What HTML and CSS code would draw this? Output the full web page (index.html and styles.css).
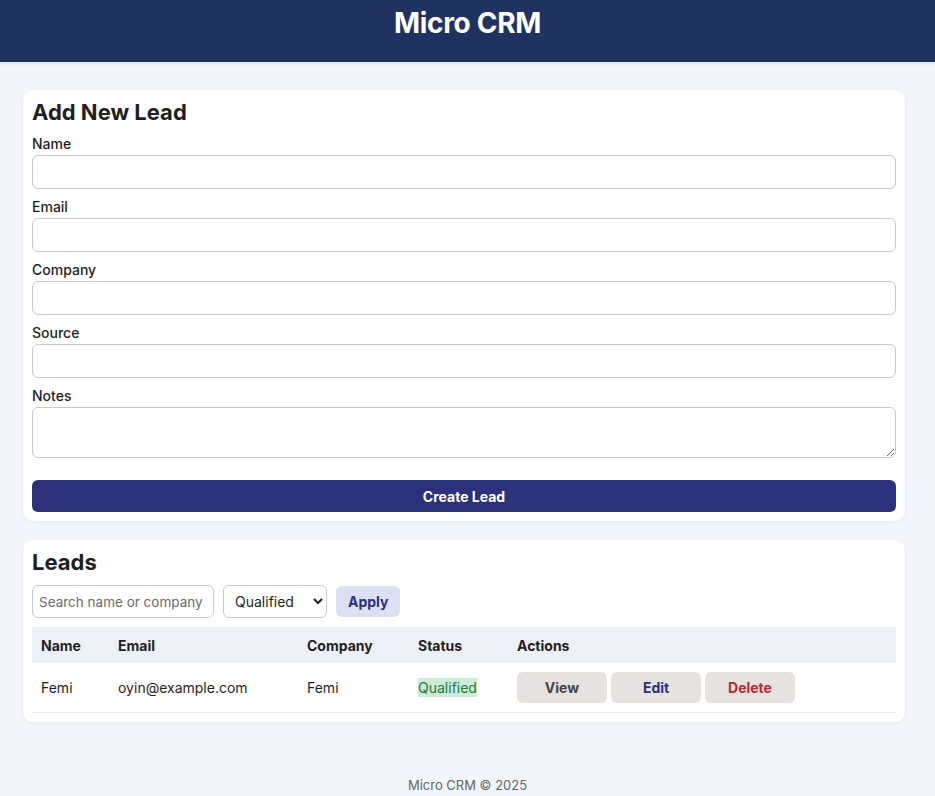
FILE: index.html
```html
<!DOCTYPE html>
<html lang="en">
<head>
<meta charset="utf-8">
<title>Micro CRM</title>
<link rel="stylesheet" href="styles.css">
</head>
<body>
<header class="topbar">
  <h1 class="brand">Micro CRM</h1>
</header>
<main class="main">
  <section class="card">
    <h2 class="card-title">Add New Lead</h2>
    <form class="lead-form">
      <label class="field-label" for="name">Name</label>
      <input class="field-input" id="name" type="text">
      <label class="field-label" for="email">Email</label>
      <input class="field-input" id="email" type="email">
      <label class="field-label" for="company">Company</label>
      <input class="field-input" id="company" type="text">
      <label class="field-label" for="source">Source</label>
      <input class="field-input" id="source" type="text">
      <label class="field-label" for="notes">Notes</label>
      <textarea class="field-input field-area" id="notes"></textarea>
      <button class="btn-primary" type="button">Create Lead</button>
    </form>
  </section>
  <section class="card">
    <h2 class="card-title">Leads</h2>
    <div class="filters">
      <input class="filter-search" type="text" placeholder="Search name or company">
      <select class="filter-select">
        <option>Qualified</option>
      </select>
      <button class="btn-apply" type="button">Apply</button>
    </div>
    <table class="leads">
      <thead>
        <tr>
          <th class="c-name">Name</th>
          <th class="c-email">Email</th>
          <th class="c-company">Company</th>
          <th class="c-status">Status</th>
          <th class="c-actions">Actions</th>
        </tr>
      </thead>
      <tbody>
        <tr>
          <td>Femi</td>
          <td>oyin@example.com</td>
          <td>Femi</td>
          <td><span class="badge">Qualified</span></td>
          <td>
            <div class="actions">
              <button class="btn-act btn-view" type="button">View</button>
              <button class="btn-act btn-edit" type="button">Edit</button>
              <button class="btn-act btn-delete" type="button">Delete</button>
            </div>
          </td>
        </tr>
      </tbody>
    </table>
  </section>
</main>
<footer class="footer">Micro CRM © 2025</footer>
</body>
</html>
```

FILE: styles.css
```css
* { box-sizing: border-box; }
html, body { margin: 0; padding: 0; }
body {
  background: #f2f5fa;
  font-family: Inter, "Noto Sans", sans-serif;
  color: #1f1f1f;
}
.topbar {
  background: #203260;
  height: 62px;
  padding-top: 6px;
  text-align: center;
  box-shadow: 0 2px 4px rgba(0,0,0,0.08);
}
.brand {
  margin: 0;
  color: #fff;
  font-size: 28px;
  line-height: 34px;
  font-weight: 700;
  letter-spacing: -0.3px;
}
.main {
  padding: 28px 30px 0 23px;
  display: flex;
  flex-direction: column;
  gap: 19px;
}
.card {
  background: #fff;
  border-radius: 10px;
  padding: 9px;
  box-shadow: 0 1px 4px rgba(30,40,70,0.06);
}
.card-title {
  margin: 0 0 9px;
  font-size: 22px;
  line-height: 27px;
  font-weight: 700;
  color: #1f1f1f;
}
.lead-form {
  display: flex;
  flex-direction: column;
}
.field-label {
  font-size: 14px;
  line-height: 17px;
  font-weight: 500;
  margin-bottom: 3px;
  color: #1f1f1f;
}
.field-input {
  height: 34px;
  border: 1px solid #c3cad6;
  border-radius: 6px;
  margin: 0 0 9px;
  font-family: inherit;
  font-size: 14px;
  padding: 0 8px;
  background: #fff;
}
.field-area {
  height: 51px;
  resize: vertical;
  margin-bottom: 22px;
}
.btn-primary {
  height: 32px;
  border: 0;
  border-radius: 6px;
  background: #2b317a;
  color: #fff;
  font-family: inherit;
  font-size: 14px;
  font-weight: 700;
}
.filters {
  display: flex;
  align-items: center;
  gap: 9px;
  margin: 9px 0 9px;
}
.filter-search {
  width: 182px;
  height: 33px;
  border: 1px solid #c3cad6;
  border-radius: 6px;
  padding: 0 6px;
  font-family: inherit;
  font-size: 13.5px;
  color: #1f1f1f;
}
.filter-search::placeholder { color: #6b6b6b; }
.filter-select {
  width: 104px;
  height: 33px;
  border: 1px solid #c3cad6;
  border-radius: 6px;
  padding: 0 7px;
  font-family: inherit;
  font-size: 14px;
  background: #fff;
  color: #1f1f1f;
}
.btn-apply {
  height: 31px;
  padding: 0 12px;
  border: 0;
  border-radius: 6px;
  background: #dde0f3;
  color: #2b317a;
  font-family: inherit;
  font-size: 14px;
  font-weight: 700;
}
.leads {
  width: 100%;
  border-collapse: collapse;
  font-size: 14px;
}
.leads th {
  background: #edf0f7;
  text-align: left;
  font-weight: 700;
  height: 36px;
  padding: 0 9px;
  color: #1f1f1f;
}
.leads td {
  height: 49px;
  padding: 0 9px;
  border-bottom: 1px solid #e5e7eb;
  color: #1f1f1f;
}
.c-name { width: 77px; }
.c-email { width: 189px; }
.c-company { width: 111px; }
.c-status { width: 99px; }
.badge {
  background: #cdebd6;
  color: #1e7a3a;
  padding: 1px 0;
}
.actions {
  display: flex;
  gap: 4px;
}
.btn-act {
  width: 90px;
  height: 31px;
  border: 0;
  border-radius: 6px;
  background: #e6e2e2;
  font-family: inherit;
  font-size: 14px;
  font-weight: 700;
}
.btn-view { color: #444; }
.btn-edit { color: #2b317a; }
.btn-delete { color: #c0262d; }
.footer {
  text-align: center;
  color: #666;
  font-size: 13px;
  padding-top: 55px;
}
```
